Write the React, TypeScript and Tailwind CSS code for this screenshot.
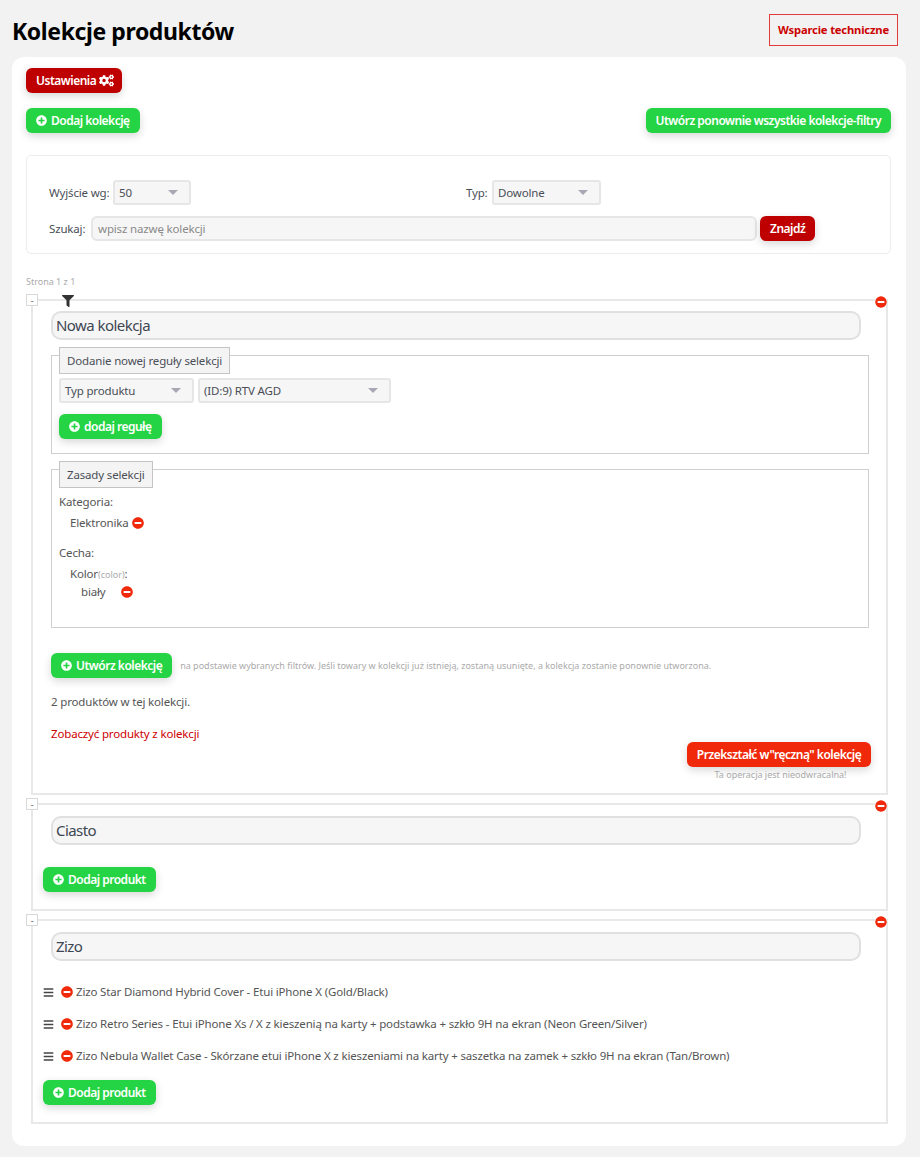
import type { ReactNode } from 'react'
import { FaBars, FaCogs, FaFilter, FaMinusCircle, FaPlusCircle } from 'react-icons/fa'

const FONT = 'font-["Noto_Sans","Open_Sans",sans-serif]'

function Btn({ children, color = 'green', className = '' }: { children: ReactNode; color?: 'green' | 'dark' | 'red'; className?: string }) {
  const bg = color === 'green' ? 'bg-[#25d444]' : color === 'dark' ? 'bg-[#bf0000]' : 'bg-[#f0290a]'
  return (
    <button className={`${bg} ${className} h-[25px] px-[10px] rounded-[6px] text-white text-[12px] font-semibold tracking-[-0.5px] flex items-center gap-[4px] whitespace-nowrap shadow-[0_3px_8px_rgba(0,0,0,0.16)]`}>
      {children}
    </button>
  )
}

function FakeSelect({ value, className = '' }: { value: string; className?: string }) {
  return (
    <div className={`${className} h-[25px] border-2 border-[#e6e6e6] rounded-[3px] bg-[#f6f6f6] pl-[4px] pr-[11px] flex items-center justify-between text-[11.5px] text-[#4a4f57]`}>
      <span>{value}</span>
      <span className="w-0 h-0 border-x-[5px] border-x-transparent border-t-[5px] border-t-[#a8a8b4]" />
    </div>
  )
}

function NameInput({ value, className = '' }: { value: string; className?: string }) {
  return (
    <div className={`${className} h-[29px] w-[810px] border-2 border-[#e0e0e0] rounded-[10px] bg-[#f6f6f6] pl-[3px] flex items-center text-[15px] tracking-[-0.55px] text-[#3d4652]`}>
      {value}
    </div>
  )
}

function Collection({ children, className, filter }: { children: ReactNode; className: string; filter?: boolean }) {
  return (
    <div className={`${className} relative ml-[5px] w-[857px] border-2 border-[#e8e8e8]`}>
      <div className="absolute left-[-7px] top-[-7px] w-[12px] h-[12px] border border-[#d8d8d8] bg-white flex items-center justify-center text-[9px] leading-none text-[#555]">-</div>
      {filter && <FaFilter className="absolute left-[29px] top-[-6px] text-[#333] text-[12px]" />}
      <FaMinusCircle className="absolute right-[-1px] top-[-5px] text-[#f0290a] text-[12px] bg-white rounded-full" />
      {children}
    </div>
  )
}

function Legend({ children }: { children: ReactNode }) {
  return (
    <div className="w-fit h-[27px] -mt-[9px] ml-[7px] border border-[#c4c4c4] bg-[#f4f4f4] px-[7px] flex items-center text-[11.5px] text-[#4a4f57] whitespace-nowrap">
      {children}
    </div>
  )
}

function ProductRow({ children }: { children: ReactNode }) {
  return (
    <div className="h-[32px] flex items-center text-[11.5px] text-[#555]">
      <FaBars className="text-[11px] text-[#444] ml-[10px] mr-[7px]" />
      <FaMinusCircle className="text-[12px] text-[#f0290a] mr-[3px]" />
      <span className="whitespace-nowrap">{children}</span>
    </div>
  )
}

export default function App() {
  return (
    <div className={`${FONT} min-h-[1157px] bg-[#f2f2f2] pl-[12px] pr-[14px] tracking-[-0.16px]`}>
      {/* naglowek */}
      <div className="h-[57px] flex items-start justify-between">
        <h1 className="mt-[15px] text-[23px] leading-[32px] font-bold tracking-[-0.4px] text-black">Kolekcje produktów</h1>
        <button className="mt-[14px] mr-[8px] h-[32px] w-[129px] border border-[#e03a3a] text-[#cc0000] text-[11.2px] font-bold whitespace-nowrap">Wsparcie techniczne</button>
      </div>

      <div className="w-[894px] h-[1089px] bg-white rounded-[12px] pt-[11px] pl-[14px]">
        <Btn color="dark" className="w-[96px] !gap-[3px]">Ustawienia <FaCogs className="text-[15px] shrink-0" /></Btn>

        <div className="mt-[15px] w-[865px] flex justify-between">
          <Btn><FaPlusCircle className="text-[11px]" /> Dodaj kolekcję</Btn>
          <Btn>Utwórz ponownie wszystkie kolekcje-filtry</Btn>
        </div>

        {/* filtry */}
        <div className="mt-[22px] w-[865px] h-[99px] border border-[#ececec] rounded-[5px] pt-[24px] pl-[22px] text-[11.5px] text-[#4a4f57]">
          <div className="flex items-center h-[25px]">
            <span className="w-[64px] whitespace-nowrap">Wyjście wg:</span>
            <FakeSelect value="50" className="w-[78px]" />
            <span className="ml-[275px] w-[26px]">Typ:</span>
            <FakeSelect value="Dowolne" className="w-[109px]" />
          </div>
          <div className="flex items-center h-[25px] mt-[11px]">
            <span className="w-[42px]">Szukaj:</span>
            <div className="w-[666px] h-[25px] border-2 border-[#e6e6e6] rounded-[6px] bg-[#f6f6f6] pl-[5px] flex items-center text-[#8a8a8a]">wpisz nazwę kolekcji</div>
            <Btn color="dark" className="ml-[3px]">Znajdź</Btn>
          </div>
        </div>

        <div className="mt-[22px] h-[12px] text-[9px] leading-[12px] tracking-normal text-[#aaa]">Strona 1 z 1</div>

        <Collection filter className="mt-[11px] h-[496px]">
          <NameInput value="Nowa kolekcja" className="mt-[10px] ml-[18px]" />
          <div className="mt-[15px] ml-[18px] w-[818px] h-[99px] border border-[#cfcfcf]">
            <Legend>Dodanie nowej reguły selekcji</Legend>
            <div className="ml-[7px] mt-[4px] flex gap-[4px]">
              <FakeSelect value="Typ produktu" className="w-[135px]" />
              <FakeSelect value="(ID:9) RTV AGD" className="w-[193px]" />
            </div>
            <Btn className="ml-[7px] mt-[11px]"><FaPlusCircle className="text-[11px]" /> dodaj regułę</Btn>
          </div>
          <div className="mt-[15px] ml-[18px] w-[818px] h-[159px] border border-[#cfcfcf] text-[11.5px] text-[#555]">
            <Legend>Zasady selekcji</Legend>
            <div className="ml-[7px] mt-[6px] leading-[16px]">Kategoria:</div>
            <div className="ml-[18px] mt-[5px] leading-[16px] flex items-center gap-[3px]">Elektronika <FaMinusCircle className="text-[12px] text-[#f0290a]" /></div>
            <div className="ml-[7px] mt-[14px] leading-[16px]">Cecha:</div>
            <div className="ml-[18px] mt-[5px] leading-[16px]">Kolor<span className="text-[9px] tracking-normal text-[#aaa]">(color)</span>:</div>
            <div className="ml-[29px] mt-[1px] leading-[16px] flex items-center gap-[15px]">biały <FaMinusCircle className="text-[12px] text-[#f0290a]" /></div>
          </div>
          <div className="mt-[25px] ml-[18px] flex items-center">
            <Btn><FaPlusCircle className="text-[11px]" /> Utwórz kolekcję</Btn>
            <span className="ml-[8px] text-[9px] tracking-normal text-[#aaa] whitespace-nowrap">na podstawie wybranych filtrów. Jeśli towary w kolekcji już istnieją, zostaną usunięte, a kolekcja zostanie ponownie utworzona.</span>
          </div>
          <div className="mt-[16px] ml-[18px] leading-[16px] text-[11.5px] text-[#555]">2 produktów w tej kolekcji.</div>
          <div className="mt-[16px] ml-[18px] leading-[16px] text-[11.5px] text-[#cc0000]">Zobaczyć produkty z kolekcji</div>
          <div className="mr-[15px] flex flex-col items-end">
            <Btn color="red" className="w-[184px] justify-center">Przekształć w"ręczną" kolekcję</Btn>
            <div className="w-[184px] pl-[3px] text-center mt-[1px] text-[9px] tracking-normal text-[#aaa]">Ta operacja jest nieodwracalna!</div>
          </div>
        </Collection>

        <Collection className="mt-[8px] h-[108px]">
          <NameInput value="Ciasto" className="mt-[11px] ml-[18px]" />
          <Btn className="mt-[22px] ml-[10px]"><FaPlusCircle className="text-[11px]" /> Dodaj produkt</Btn>
        </Collection>

        <Collection className="mt-[8px] h-[205px]">
          <NameInput value="Zizo" className="mt-[11px] ml-[18px]" />
          <div className="mt-[15px]">
            <ProductRow>Zizo Star Diamond Hybrid Cover - Etui iPhone X (Gold/Black)</ProductRow>
            <ProductRow>Zizo Retro Series - Etui iPhone Xs / X z kieszenią na karty + podstawka + szkło 9H na ekran (Neon Green/Silver)</ProductRow>
            <ProductRow>Zizo Nebula Wallet Case - Skórzane etui iPhone X z kieszeniami na karty + saszetka na zamek + szkło 9H na ekran (Tan/Brown)</ProductRow>
          </div>
          <Btn className="mt-[8px] ml-[10px]"><FaPlusCircle className="text-[11px]" /> Dodaj produkt</Btn>
        </Collection>
      </div>
    </div>
  )
}
